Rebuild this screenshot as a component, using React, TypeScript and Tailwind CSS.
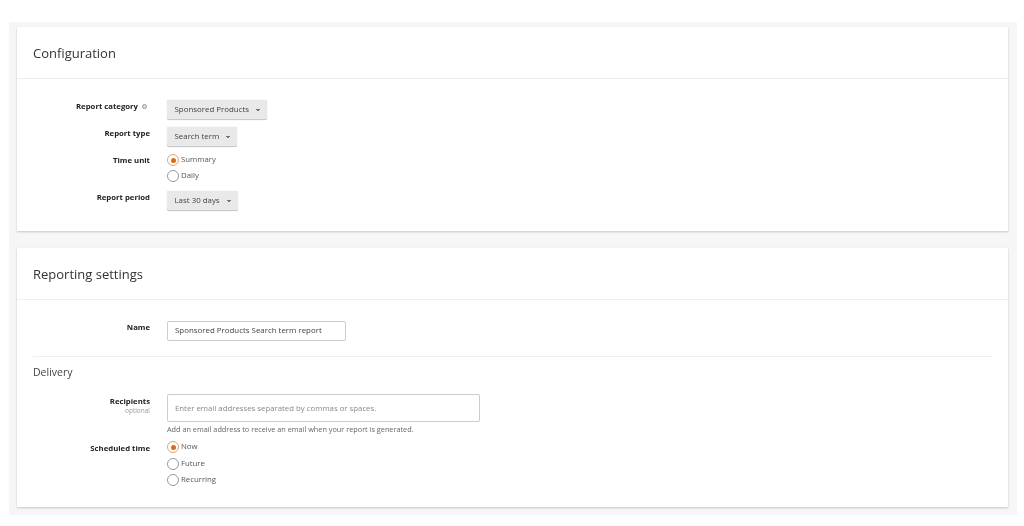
const font = "font-['Open_Sans','Noto_Sans',sans-serif]";

function Chevron() {
  return (
    <svg width="6" height="4" viewBox="0 0 6 4" className="ml-[6px] shrink-0">
      <path d="M1 1l2 2 2-2" fill="#777" stroke="#666" strokeWidth="0.8" />
    </svg>
  );
}

function Select({ label, width }: { label: string; width: string }) {
  return (
    <div
      className={`flex h-[20px] items-center rounded-[2px] border-b border-[#c9c9c9] bg-[#e9e9e9] pl-[7.5px] pt-[1px] text-[7.9px] text-[#444] shadow-[0_0_1px_rgba(0,0,0,0.25)] ${width}`}
    >
      <span className="whitespace-nowrap">{label}</span>
      <Chevron />
    </div>
  );
}

function Radio({ label, checked }: { label: string; checked?: boolean }) {
  return (
    <div className="flex h-[16.5px] items-center gap-[2px] text-[7.8px] text-[#555]">
      <span
        className={`flex size-[12px] items-center justify-center rounded-full border bg-white ${
          checked ? "border-[#d8a67f]" : "border-[#999]"
        }`}
      >
        {checked && <span className="size-[5px] rounded-full bg-[#e06a10]" />}
      </span>
      <span>{label}</span>
    </div>
  );
}

function Row({
  label,
  children,
  className = "",
  labelClass = "",
}: {
  label: React.ReactNode;
  children: React.ReactNode;
  className?: string;
  labelClass?: string;
}) {
  return (
    <div className={`flex ${className}`}>
      <div className={`w-[133px] shrink-0 text-right text-[7.75px] font-bold leading-[12px] text-[#222] ${labelClass}`}>
        {label}
      </div>
      <div className="ml-[17px]">{children}</div>
    </div>
  );
}

function CardHeader({ title }: { title: string }) {
  return (
    <div className="flex h-[52px] items-center border-b border-[#eeeeee] pl-[16px] pt-[2px] text-[13px] text-[#333]">
      {title}
    </div>
  );
}

export default function App() {
  return (
    <div className={`h-[526px] w-[1024px] overflow-hidden bg-white pl-[9px] pt-[22px] ${font}`}>
      <div className="flex h-[493px] w-[1008px] flex-col gap-[17px] bg-[#f6f6f6] px-[8px] pt-[5px] blur-[0.65px]">
        <section className="h-[204px] w-[991px] bg-white shadow-[0_1px_2px_rgba(0,0,0,0.2)]">
          <CardHeader title="Configuration" />
          <div className="pt-[21px]">
            <Row
              label={
                <span className="inline-flex items-center pr-[3px]">
                  Report category
                  <span className="ml-[4px] size-[5px] rounded-full border border-[#999] bg-[#ddd]" />
                </span>
              }
            >
              <Select label="Sponsored Products" width="w-[100px]" />
            </Row>
            <Row label="Report type" className="mt-[7px]">
              <Select label="Search term" width="w-[70px]" />
            </Row>
            <Row label="Time unit" className="mt-[5px]" labelClass="pt-[2px]">
              <div className="[&>div]:h-[16px]">
                <Radio label="Summary" checked />
                <Radio label="Daily" />
              </div>
            </Row>
            <Row label="Report period" className="mt-[7px]">
              <Select label="Last 30 days" width="w-[71px]" />
            </Row>
          </div>
        </section>

        <section className="h-[259px] w-[991px] bg-white shadow-[0_1px_2px_rgba(0,0,0,0.2)]">
          <CardHeader title="Reporting settings" />
          <div className="px-[16px] pt-[21px]">
            <div className="-ml-[16px]">
              <Row label="Name">
                <div className="flex h-[20px] w-[179px] items-center rounded-[2px] border border-[#cccccc] pl-[7px] text-[7.9px] text-[#444]">
                  Sponsored Products Search term report
                </div>
              </Row>
            </div>
            <div className="mt-[15px] border-t border-[#eeeeee]" />
            <div className="flex h-[31px] items-center text-[10.5px] text-[#444]">Delivery</div>
            <div className="-ml-[16px] mt-[6px]">
              <Row
                labelClass="pt-[1px]"
                label={
                  <>
                    <div>Recipients</div>
                    <div className="text-[6.5px] font-normal leading-[8px] text-[#999]">optional</div>
                  </>
                }
              >
                <div className="flex h-[28px] w-[313px] items-center rounded-[2px] border border-[#cccccc] pl-[7px] pt-[2px] text-[7.8px] text-[#888]">
                  Enter email addresses separated by commas or spaces.
                </div>
                <div className="mt-[2px] text-[7.3px] leading-[10px] text-[#666]">
                  Add an email address to receive an email when your report is generated.
                </div>
              </Row>
              <Row label="Scheduled time" className="mt-[5px]" labelClass="pt-[3px]">
                <Radio label="Now" checked />
                <Radio label="Future" />
                <Radio label="Recurring" />
              </Row>
            </div>
          </div>
        </section>
      </div>
    </div>
  );
}
